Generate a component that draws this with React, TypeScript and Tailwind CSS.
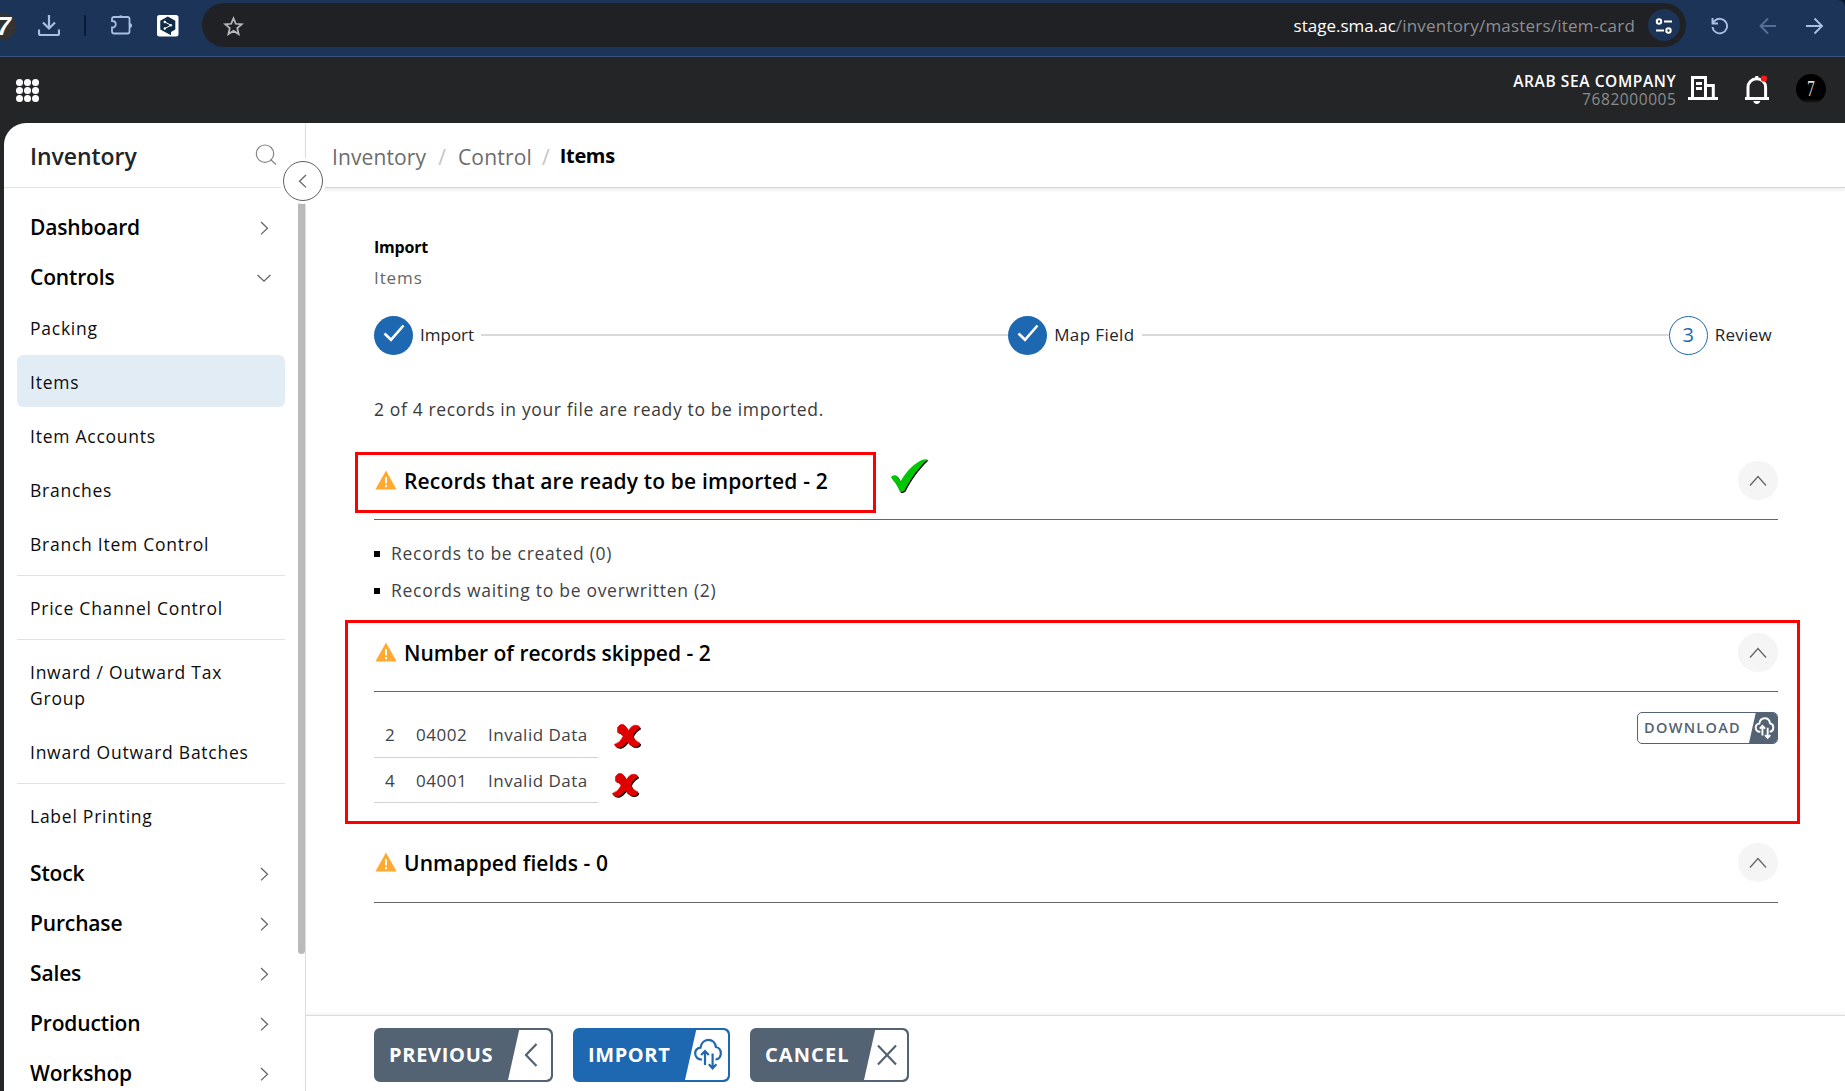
import type { ReactNode } from "react";
import { clsx } from "clsx";

type MenuEntry = string | null;

// null renders a separator
const controlItems: MenuEntry[] = [
  "Packing",
  "Items",
  "Item Accounts",
  "Branches",
  "Branch Item Control",
  null,
  "Price Channel Control",
  null,
  "Inward / Outward Tax Group",
  "Inward Outward Batches",
  null,
  "Label Printing",
];

const menuGroups = ["Stock", "Purchase", "Sales", "Production", "Workshop"];

const skippedRecords = [
  { row: 2, code: "04002", reason: "Invalid Data" },
  { row: 4, code: "04001", reason: "Invalid Data" },
];

type Direction = "up" | "right" | "down" | "left";

const chevronPoints: Record<Direction, string> = {
  up: "M2 13.5 10 4.5l8 9",
  right: "M7 4l6.5 6.2L7 16.4",
  down: "M3.6 7l6.4 6.2L16.4 7",
  left: "M13 4l-6.5 6.2 6.5 6.2",
};

function Chevron({ dir, className }: { dir: Direction; className?: string }) {
  return (
    <svg viewBox="0 0 20 20" fill="none" stroke="currentColor" strokeWidth="1.3" className={clsx("size-5 text-[#666]", className)}>
      <path d={chevronPoints[dir]} />
    </svg>
  );
}

function CloudSync({ className, thick }: { className?: string; thick?: boolean }) {
  return (
    <svg viewBox="0 0 28 32" fill="none" stroke="currentColor" strokeWidth={thick ? 2.8 : 2.2} className={className}>
      <path d="M8 21.5C4 21.8 1.2 19 1.2 15.6c0-3.2 2.2-5.5 5.3-5.9C7.200 5 10.4 1.8 14.3 1.8c4 0 7.1 2.9 7.6 7.2 3 .6 4.9 3 4.9 6.200 0 3.4-2.2 5.9-5.3 6.300" />
      <path d="M11 27V13M7.2 17l3.8-4 3.8 4M18.600 15.500v14.500M14.800 26.300l3.800 4 3.800-4" />
    </svg>
  );
}

function WarningIcon() {
  return (
    <svg viewBox="0 0 22 20" className="h-5 w-[22px] -translate-y-px">
      <path d="M11 .5 21.6 19.500H.4Z" fill="#ffa931" />
      <path d="M11 7v6.5M11 15v2.3" stroke="#fff" strokeWidth="2" />
    </svg>
  );
}

function CheckMark({ className }: { className?: string }) {
  const d = "M0 18.5C1 15.8 5 15.5 6.3 17.5L9.5 22.500C15 12.500 24 3.500 32.500 .6Q35 0 36.500.4C28 8 19 20 13.600 31.500Q11 33.500 9 33Q6 25 0 18.500Z";
  return (
    <svg viewBox="0 0 38 35" className={className}>
      <path d={d} fill="#000" transform="translate(1 1)" />
      <path d={d} fill="#00c800" />
    </svg>
  );
}

function CrossMark({ className }: { className?: string }) {
  const d = "M3.500 3.500Q6-.8 10 .8Q12.500 3 14.300 7Q17.500 1 22 1.200Q25.500 1.200 25.800 4Q21 6.500 18.500 12Q21 17.500 26 19Q25.500 23 20.500 22.800Q16 22 13.300 17.500Q10 22.500 6 23.500Q1.500 23.800.3 20.500Q6.500 18.500 9 12.500Q7.500 9 3.500 8.300Z";
  return (
    <svg viewBox="0 0 28 26" className={className}>
      <path d={d} fill="#000" transform="translate(1.2 1.2)" />
      <path d={d} fill="#e00000" stroke="#e00000" strokeWidth=".6" />
    </svg>
  );
}

function BrowserBar() {
  return (
    <div className="h-[57px] shrink-0 bg-[#0b1830]">
      <div className="relative flex h-full items-start rounded-tr-[7px] border-b border-[#3a5179] bg-[#1c3458] text-[#a9bfe3]">
        <div className="-ml-[10px] mt-[13px] flex h-[27px] w-[26px] items-center justify-end overflow-hidden rounded-full bg-[#333] pr-[5px] font-['Liberation_Sans'] text-[25px] leading-none font-bold italic text-white">
          7
        </div>
        <svg viewBox="0 0 22 22" fill="none" stroke="currentColor" strokeWidth="2.2" className="mt-[14px] ml-[22px] size-[22px]">
          <path d="M11 1v13M5 8.5l6 6 6-6M1 15.500v4q0 1.500 1.500 1.500h17q1.500 0 1.500-1.500v-4" />
        </svg>
        <div className="mt-[15px] ml-[24px] h-[21px] w-[2px] bg-[#0b1a38]" />
        <svg viewBox="0 0 22 22" fill="none" stroke="currentColor" strokeWidth="1.8" className="mt-[13px] ml-[25px] size-[22px]">
          <path d="M3 4h13.500q2 0 2 2v12.500q0 2-2 2H3q-2 0-2-2v-4c5 0 5-6.500 0-6.500V6q0-2 2-2Z" />
          <path d="M7.500 4a2.500 2.800 0 0 1 4.600 0ZM18.500 10a2.500 2.500 0 0 1 0 5Z" fill="currentColor" stroke="none" />
        </svg>
        <svg viewBox="0 0 22 22" className="mt-[15px] ml-[24px] h-[22px] w-[22px]">
          <rect width="21.500" height="21.500" rx="2.500" fill="#fff" />
          <path d="M10.800 1.500 18.300 5.800v8.700L14 17v3.200L3.300 14.500V5.800Z" fill="#0f2b46" />
          <path d="M7.800 7l6.200 3.200-6.200 3.400" stroke="#fff" strokeWidth="1" fill="none" />
          <circle cx="7.800" cy="7" r="1.200" fill="#fff" />
          <circle cx="13.800" cy="10.200" r="1.300" fill="#fff" />
          <circle cx="7.800" cy="13.500" r="1.200" fill="#fff" />
        </svg>

        <div className="mt-[3px] ml-[23px] flex h-[44px] w-[1484px] items-center rounded-full bg-[#202124] pr-[6px] pl-[21px]">
          <svg viewBox="0 0 20 20" fill="none" stroke="#b4b6b9" strokeWidth="1.700" className="mt-[2px] size-[21px]">
            <path d="M10 2.200l2.200 5.200 5.700.5-4.300 3.700 1.300 5.600L10 14.200l-4.900 3 1.300-5.600L2.100 7.900l5.700-.5Z" />
          </svg>
          <div className="mt-[2px] ml-auto font-['Open_Sans'] text-[17px] leading-6 text-[#8d8f92]">
            <span className="text-white">stage.sma.ac</span>
            <span className="tracking-[0.200px]">/inventory/masters/item-card</span>
          </div>
          <div className="ml-[13px] flex size-[32px] items-center justify-center rounded-full bg-[#1c3458]">
            <svg viewBox="0 0 18 18" fill="none" stroke="#fff" strokeWidth="2" className="mt-px size-[18px]">
              <circle cx="4" cy="4.500" r="2.200" />
              <circle cx="13.500" cy="13.500" r="2.200" />
              <path d="M9 4.500h8M1 13.500h8" />
            </svg>
          </div>
        </div>

        <svg viewBox="0 0 18 18" fill="none" stroke="currentColor" strokeWidth="1.900" className="mt-[17px] ml-[25px] size-[18px]">
          <path d="M1.500 10a7.300 7.300 0 1 0 2.200-6.200L1.500 6M1.500 1v5.500H7" />
        </svg>
        <svg viewBox="0 0 18 18" fill="none" stroke="#566f98" strokeWidth="1.900" className="mt-[17px] ml-[30px] size-[18px]">
          <path d="M17 9H2M9 1.500 1.500 9 9 16.500" />
        </svg>
        <svg viewBox="0 0 18 18" fill="none" stroke="currentColor" strokeWidth="1.900" className="mt-[17px] ml-[29px] size-[18px]">
          <path d="M0 9h16M8.500 1.500 16 9l-7.500 7.500" />
        </svg>
      </div>
    </div>
  );
}

function AppHeader() {
  return (
    <header className="flex h-[66px] shrink-0 items-start bg-[#242527] pl-4">
      <div className="mt-[22px] grid grid-cols-3 gap-[1px]">
        {Array.from({ length: 9 }, (_, i) => (
          <span key={i} className="size-[7px] rounded-full bg-white" />
        ))}
      </div>
      <div className="mt-[15px] ml-auto text-right">
        <p className="-mr-[0.300px] text-[15.500px] leading-[18px] font-semibold tracking-[0.600px] text-white">ARAB SEA COMPANY</p>
        <p className="-mr-[0.500px] text-[15.500px] leading-[18px] tracking-[0.580px] text-[#8b8b8b]">7682000005</p>
      </div>
      <svg viewBox="0 0 30 24" fill="none" stroke="#fff" strokeWidth="3" className="mt-[19px] ml-[12px] h-6 w-[30px]">
        <path d="M0 22.500h30M4.500 22V1.500h13V22M19 9.500h6.300V22" />
        <path d="M8 7.500h6M8 12.500h6" />
      </svg>
      <svg viewBox="0 0 26 30" fill="none" className="mt-[18px] ml-[26px] h-[30px] w-[26px]">
        <path d="M1 23.500h24M4 23V12.500c0-5 3.700-8.700 8.800-8.700s8.800 3.700 8.800 8.700V23" stroke="#fff" strokeWidth="3" />
        <path d="M12.800 1v3" stroke="#fff" strokeWidth="3" />
        <path d="M9.300 26h7q-.8 3-3.500 3t-3.500-3Z" fill="#fff" />
        <circle cx="20" cy="3.600" r="3.200" fill="#f01c1c" />
      </svg>
      <div className="mt-[17px] mr-[19px] ml-[26px] flex size-[30px] items-center justify-center rounded-full bg-linear-to-b from-black from-75% to-[#2c2c2c] font-['Liberation_Serif'] text-[24px] leading-none text-[#ddd]">
        <span className="-mt-[2px] scale-x-65">7</span>
      </div>
    </header>
  );
}

function MenuGroup({ label, open }: { label: string; open?: boolean }) {
  return (
    <button className="flex h-[50px] w-full items-center justify-between pr-[24px] pl-[26px] text-[21px] font-semibold tracking-[-0.150px] text-black">
      {label}
      <Chevron dir={open ? "down" : "right"} />
    </button>
  );
}

function Sidebar() {
  return (
    <aside className="relative flex w-[302px] shrink-0 flex-col border-r border-[#d5dfe8]">
      <div className="flex h-[65px] shrink-0 items-center justify-between border-b border-[#d3e4f2] pt-[2px] pr-[28px] pl-[26px]">
        <h1 className="text-[23px] leading-7 font-semibold tracking-[-0.050px] text-[#212529]">Inventory</h1>
        <svg viewBox="0 0 22 22" fill="none" stroke="#858585" strokeWidth="1.200" className="-mt-[3px] size-[22px]">
          <circle cx="10" cy="9.700" r="8.700" />
          <path d="M15.500 15.500l5.500 5" />
        </svg>
      </div>

      <div className="flex min-h-0 flex-1">
        <nav className="min-w-0 flex-1 overflow-hidden pt-[15px]">
          <MenuGroup label="Dashboard" />
          <MenuGroup label="Controls" open />
          <ul className="-mt-[2px] mb-[6px] ml-[13px] flex w-[268px] flex-col">
            {controlItems.map((item, i) =>
              item === null ? (
                <li key={i} className="mt-1 mb-[5px] h-px bg-[#e2e2e2]" />
              ) : (
                <li
                  key={i}
                  className={clsx(
                    "mb-[2px] rounded-[6px] pt-[14px] pr-10 pb-3 pl-[13px] text-[17.500px] leading-[26px] tracking-[0.750px] text-[#0d0d0d]",
                    item === "Items" && "bg-[#e2ecf5]",
                    item === "Inward Outward Batches" && "whitespace-nowrap"
                  )}
                >
                  {item}
                </li>
              )
            )}
          </ul>
          {menuGroups.map((label) => (
            <MenuGroup key={label} label={label} />
          ))}
        </nav>
        <div className="h-[766px] w-[7px] rounded-b-[4px] bg-[#bababa]" />
      </div>

      <button className="absolute top-[38px] left-[279px] flex size-[40px] items-center justify-center rounded-full border border-[#606060] bg-white ring-[3px] ring-white">
        <Chevron dir="left" />
      </button>
    </aside>
  );
}

function StepCircle({ done, children }: { done?: boolean; children?: ReactNode }) {
  return (
    <span
      className={clsx(
        "flex size-[39px] shrink-0 items-center justify-center rounded-full text-[20px]",
        done ? "bg-[#1d68b0]" : "border border-[#1d68b0] text-[#1d68b0]"
      )}
    >
      {done ? (
        <svg viewBox="0 0 22 18" fill="none" stroke="#fff" strokeWidth="2.600" className="-mt-[5px] h-[18px] w-[22px]">
          <path d="M1.500 9.500 8 15.800 20.500 1.500" />
        </svg>
      ) : (
        <span className="-mt-[2px]">{children}</span>
      )}
    </span>
  );
}

function Stepper() {
  return (
    <div className="mt-[23px] flex items-center text-[17px] leading-6 text-[#212529]">
      <StepCircle done />
      <span className="-mt-px ml-[7px]">Import</span>
      <span className="-mt-px ml-[7px] h-[2px] w-[527px] bg-[#d9d9d9]" />
      <StepCircle done />
      <span className="-mt-px ml-[7px] tracking-[0.400px]">Map Field</span>
      <span className="-mt-px ml-[7px] h-[2px] flex-1 bg-[#d9d9d9]" />
      <StepCircle>3</StepCircle>
      <span className="-mt-px mr-[6px] ml-[7px] tracking-[0.300px]">Review</span>
    </div>
  );
}

function SectionHeader({ title, className, titleClassName }: { title: string; className?: string; titleClassName?: string }) {
  return (
    <div className={clsx("flex h-[59px] items-start border-b border-[#666] pl-px", className)}>
      <div className="flex h-[39px] items-center gap-[7px]">
        <WarningIcon />
        <h2 className={clsx("mt-px text-[21px] leading-7 font-semibold text-black", titleClassName)}>{title}</h2>
      </div>
      <button className="ml-auto flex h-[39px] w-[40px] items-center justify-center rounded-full bg-[#f5f5f5]">
        <Chevron dir="up" className="mt-[3px]" />
      </button>
    </div>
  );
}

function ActionButton({ label, icon, primary, className }: { label: string; icon: ReactNode; primary?: boolean; className: string }) {
  return (
    <button
      className={clsx(
        "flex h-[54px] items-stretch overflow-hidden rounded-[6px] border-2 pl-[13px] text-[20px] font-bold text-white",
        primary ? "border-[#1d68b0] bg-[#1d68b0]" : "border-[#546373] bg-[#546373]",
        className
      )}
    >
      <span className="self-center">{label}</span>
      <span
        className={clsx(
          "ml-auto flex w-[43px] items-center justify-center rounded-r-[5px] bg-white pl-[3px] [clip-path:polygon(26%_0,100%_0,100%_100%,0_100%)]",
          primary ? "text-[#1d68b0]" : "text-[#546373]"
        )}
      >
        {icon}
      </span>
    </button>
  );
}

export default function App() {
  return (
    <div className="flex h-[1091px] w-[1845px] flex-col overflow-hidden bg-[#242527] font-['Open_Sans',sans-serif]">
      <BrowserBar />
      <AppHeader />

      <div className="ml-1 flex min-h-0 flex-1 rounded-tl-[22px] bg-white">
        <Sidebar />

        <main className="flex min-w-0 flex-1 flex-col">
          <div className="flex h-[65px] shrink-0 items-center border-b border-[#d5d5d5] pt-[3px] pl-[26px] text-[21px] leading-7 text-[#6c6c6c] shadow-[0_2px_4px_rgba(0,0,0,0.08)]">
            <span className="tracking-[0.120px]">Inventory</span>
            <span className="mx-[12px] text-[#c4c4c4]">/</span>
            <span className="tracking-[0.200px]">Control</span>
            <span className="mx-[10px] text-[#c4c4c4]">/</span>
            <span className="-mt-px text-[20px] font-bold tracking-[-0.350px] text-black">Items</span>
          </div>

          <div className="relative flex-1 pt-[43px] pr-[67px] pl-[68px]">
            <h3 className="pt-px text-[16px] leading-[30px] font-bold tracking-[-0.200px] text-black">Import</h3>
            <p className="text-[17px] leading-[31px] tracking-[0.900px] text-[#666]">Items</p>

            <Stepper />

            <p className="mt-[39px] text-[17.500px] leading-[30px] tracking-[0.640px] text-[#3a3a3a]">
              2 of 4 records in your file are ready to be imported.
            </p>

            <SectionHeader title="Records that are ready to be imported - 2" className="mt-[37px]" titleClassName="tracking-[0.160px]" />
            <ul className="mt-[15px] text-[17.500px] leading-[37px] tracking-[0.710px] text-[#3f4246]">
              <li className="flex items-center gap-[11px]">
                <span className="size-[6px] bg-black" />
                Records to be created (0)
              </li>
              <li className="flex items-center gap-[11px]">
                <span className="size-[6px] bg-black" />
                Records waiting to be overwritten (2)
              </li>
            </ul>

            <SectionHeader title="Number of records skipped - 2" className="mt-[24px]" />
            <div className="mt-[20px] flex items-start justify-between">
              <div className="w-[224px] text-[17px] tracking-[0.500px] text-[#3f4246]">
                {skippedRecords.map((rec) => (
                  <div key={rec.code} className="flex h-[46px] items-center border-b border-[#d3d3d3] pt-px pl-[11px] last:h-[45px]">
                    <span className="w-[31px]">{rec.row}</span>
                    <span className="w-[72px]">{rec.code}</span>
                    <span className="whitespace-nowrap">{rec.reason}</span>
                  </div>
                ))}
              </div>
              <button className="flex h-8 w-[141px] items-stretch overflow-hidden rounded-[5px] border border-[#546373] bg-white pl-[6px] text-[14.500px] font-semibold tracking-[1.300px] text-[#546373]">
                <span className="self-center">DOWNLOAD</span>
                <span className="ml-auto flex w-[28px] items-center justify-center bg-[#546373] pl-[2px] text-white [clip-path:polygon(24%_0,100%_0,100%_100%,0_100%)]">
                  <CloudSync thick className="-mt-px h-[22px] w-[21px]" />
                </span>
              </button>
            </div>

            <SectionHeader title="Unmapped fields - 0" className="mt-[40px] h-[60px]" titleClassName="tracking-[0.090px]" />

            {/* annotations */}
            <div className="pointer-events-none absolute top-[264px] left-[49px] h-[61px] w-[521px] border-[3px] border-[#ff0000]" />
            <CheckMark className="absolute top-[271px] left-[585px] h-[35px] w-[38px]" />
            <div className="pointer-events-none absolute top-[432px] left-[39px] h-[204px] w-[1455px] border-[3px] border-[#ff0000]" />
            <CrossMark className="absolute top-[536px] left-[308px] h-[26px] w-[28px]" />
            <CrossMark className="absolute top-[585px] left-[306px] h-[26px] w-[28px]" />
          </div>

          <footer className="flex h-[76px] shrink-0 items-start border-t border-[#dcdcdc] pt-[12px] pl-[68px] shadow-[0_-1px_3px_rgba(0,0,0,0.08)]">
            <ActionButton
              label="PREVIOUS"
              className="w-[179px] tracking-[0.700px]"
              icon={
                <svg viewBox="0 0 14 24" fill="none" stroke="currentColor" strokeWidth="2.200" className="h-6 w-[14px]">
                  <path d="M12.500 1 2 12l10.500 11" />
                </svg>
              }
            />
            <ActionButton label="IMPORT" primary className="ml-5 w-[157px] tracking-[0.600px]" icon={<CloudSync className="-mt-[2px] h-8 w-7" />} />
            <ActionButton
              label="CANCEL"
              className="ml-5 w-[159px] tracking-[1.100px]"
              icon={
                <svg viewBox="0 0 20 22" fill="none" stroke="currentColor" strokeWidth="2.200" className="h-[22px] w-5">
                  <path d="M1 1.500l18 19M19 1.500l-18 19" />
                </svg>
              }
            />
          </footer>
        </main>
      </div>
    </div>
  );
}
